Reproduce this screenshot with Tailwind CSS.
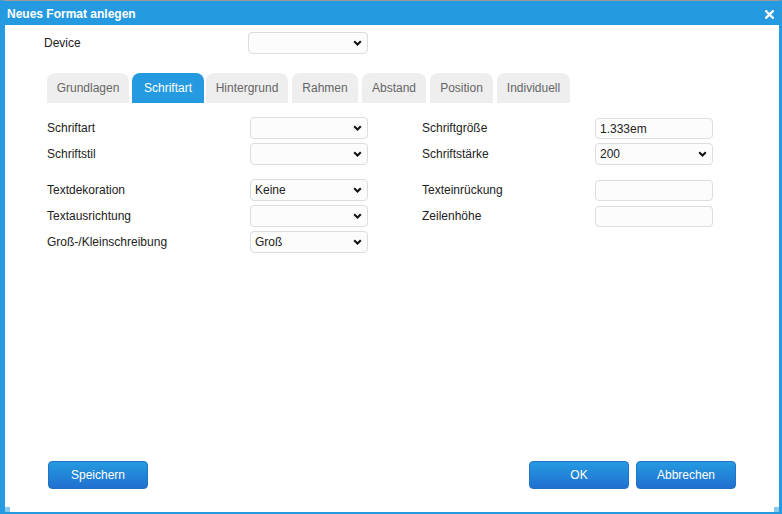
<!DOCTYPE html>
<html lang="de">
<head>
<meta charset="utf-8">
<title>Neues Format anlegen</title>
<script src="https://cdn.jsdelivr.net/npm/@tailwindcss/browser@4"></script>
</head>
<body class="w-[782px] h-[514px] overflow-hidden bg-white font-['Liberation_Sans',Arial,sans-serif] text-[12px] text-[#222]">
<div class="relative w-[782px] h-[514px] flex flex-col border-t border-t-[#9a9a9a] border-l-[5px] border-r-[3px] border-b-[2px] border-l-[#259ae0] border-r-[#259ae0] border-b-[#259ae0]">
  <header class="h-[24px] shrink-0 bg-[#259ae0] flex items-center justify-between pl-[2px] pr-[5px] text-white font-bold">
    <span class="mt-[2px]">Neues Format anlegen</span>
    <svg class="w-[9px] h-[9px] mt-[2px]" viewBox="0 0 9 9" aria-hidden="true"><path d="M1.2 1.2L7.8 7.8M7.8 1.2L1.2 7.8" stroke="#fff" stroke-width="2.3" stroke-linecap="square" fill="none"/></svg>
  </header>
  <main class="relative flex-1 flex flex-col pb-[23px]">
    <div class="flex items-center h-[22px] mt-[7px] pl-[39px]">
      <label class="w-[204px]">Device</label>
      <div class="relative w-[120px] h-[22px]">
        <select class="appearance-none w-full h-full pl-[4px] rounded-[4px] border border-[#ddd] bg-[#fcfcfc] text-[12px]"><option></option></select>
        <svg class="absolute right-[6px] top-[8px] w-[9px] h-[6px] pointer-events-none" viewBox="0 0 9 6" aria-hidden="true"><path d="M1.2 1.2L4.5 4.5L7.8 1.2" stroke="#111" stroke-width="2" fill="none"/></svg>
      </div>
    </div>
    <nav class="flex mt-[19px] ml-[42px] h-[30px]">
      <a class="w-[82px] rounded-t-[8px] bg-[#eeeeee] text-[#666] flex items-center justify-center">Grundlagen</a>
      <a class="ml-[3px] w-[72px] rounded-t-[8px] bg-[#259ae0] text-white flex items-center justify-center">Schriftart</a>
      <a class="ml-[2px] w-[82px] rounded-t-[8px] bg-[#eeeeee] text-[#666] flex items-center justify-center">Hintergrund</a>
      <a class="ml-[4px] w-[66px] rounded-t-[8px] bg-[#eeeeee] text-[#666] flex items-center justify-center">Rahmen</a>
      <a class="ml-[4px] w-[64px] rounded-t-[8px] bg-[#eeeeee] text-[#666] flex items-center justify-center">Abstand</a>
      <a class="ml-[4px] w-[63px] rounded-t-[8px] bg-[#eeeeee] text-[#666] flex items-center justify-center">Position</a>
      <a class="ml-[4px] w-[73px] rounded-t-[8px] bg-[#eeeeee] text-[#666] flex items-center justify-center">Individuell</a>
    </nav>
    <section class="flex mt-[14px] ml-[42px]">
      <div class="w-[375px] flex flex-col">
        <div class="flex items-center h-[22px] mb-[4px]"><label class="w-[203px]">Schriftart</label>
          <div class="relative w-[118px] h-[22px]"><select class="appearance-none w-full h-full pl-[4px] rounded-[4px] border border-[#ddd] bg-[#fcfcfc] text-[12px]"><option></option></select><svg class="absolute right-[6px] top-[8px] w-[9px] h-[6px] pointer-events-none" viewBox="0 0 9 6" aria-hidden="true"><path d="M1.2 1.2L4.5 4.5L7.8 1.2" stroke="#111" stroke-width="2" fill="none"/></svg></div></div>
        <div class="flex items-center h-[22px] mb-[14px]"><label class="w-[203px]">Schriftstil</label>
          <div class="relative w-[118px] h-[22px]"><select class="appearance-none w-full h-full pl-[4px] rounded-[4px] border border-[#ddd] bg-[#fcfcfc] text-[12px]"><option></option></select><svg class="absolute right-[6px] top-[8px] w-[9px] h-[6px] pointer-events-none" viewBox="0 0 9 6" aria-hidden="true"><path d="M1.2 1.2L4.5 4.5L7.8 1.2" stroke="#111" stroke-width="2" fill="none"/></svg></div></div>
        <div class="flex items-center h-[22px] mb-[4px]"><label class="w-[203px]">Textdekoration</label>
          <div class="relative w-[118px] h-[22px]"><select class="appearance-none w-full h-full pl-[4px] rounded-[4px] border border-[#ddd] bg-[#fcfcfc] text-[12px]"><option>Keine</option></select><svg class="absolute right-[6px] top-[8px] w-[9px] h-[6px] pointer-events-none" viewBox="0 0 9 6" aria-hidden="true"><path d="M1.2 1.2L4.5 4.5L7.8 1.2" stroke="#111" stroke-width="2" fill="none"/></svg></div></div>
        <div class="flex items-center h-[22px] mb-[4px]"><label class="w-[203px]">Textausrichtung</label>
          <div class="relative w-[118px] h-[22px]"><select class="appearance-none w-full h-full pl-[4px] rounded-[4px] border border-[#ddd] bg-[#fcfcfc] text-[12px]"><option></option></select><svg class="absolute right-[6px] top-[8px] w-[9px] h-[6px] pointer-events-none" viewBox="0 0 9 6" aria-hidden="true"><path d="M1.2 1.2L4.5 4.5L7.8 1.2" stroke="#111" stroke-width="2" fill="none"/></svg></div></div>
        <div class="flex items-center h-[22px]"><label class="w-[203px]">Groß-/Kleinschreibung</label>
          <div class="relative w-[118px] h-[22px]"><select class="appearance-none w-full h-full pl-[4px] rounded-[4px] border border-[#ddd] bg-[#fcfcfc] text-[12px]"><option>Groß</option></select><svg class="absolute right-[6px] top-[8px] w-[9px] h-[6px] pointer-events-none" viewBox="0 0 9 6" aria-hidden="true"><path d="M1.2 1.2L4.5 4.5L7.8 1.2" stroke="#111" stroke-width="2" fill="none"/></svg></div></div>
      </div>
      <div class="w-[291px] flex flex-col">
        <div class="flex items-center h-[22px] mb-[4px]"><label class="w-[173px]">Schriftgröße</label><input value="1.333em" class="w-[118px] h-[21px] mt-[1px] px-[4px] rounded-[4px] border border-[#ddd] bg-[#fcfcfc] text-[12px]"></div>
        <div class="flex items-center h-[22px] mb-[14px]"><label class="w-[173px]">Schriftstärke</label>
          <div class="relative w-[118px] h-[22px]"><select class="appearance-none w-full h-full pl-[4px] rounded-[4px] border border-[#ddd] bg-[#fcfcfc] text-[12px]"><option>200</option></select><svg class="absolute right-[6px] top-[8px] w-[9px] h-[6px] pointer-events-none" viewBox="0 0 9 6" aria-hidden="true"><path d="M1.2 1.2L4.5 4.5L7.8 1.2" stroke="#111" stroke-width="2" fill="none"/></svg></div></div>
        <div class="flex items-center h-[22px] mb-[4px]"><label class="w-[173px]">Texteinrückung</label><input class="w-[118px] h-[21px] mt-[1px] px-[4px] rounded-[4px] border border-[#ddd] bg-[#fcfcfc] text-[12px]"></div>
        <div class="flex items-center h-[22px]"><label class="w-[173px]">Zeilenhöhe</label><input class="w-[118px] h-[21px] mt-[1px] px-[4px] rounded-[4px] border border-[#ddd] bg-[#fcfcfc] text-[12px]"></div>
      </div>
    </section>
    <footer class="mt-auto flex pl-[43px] pr-[43px]">
      <button class="w-[100px] h-[28px] rounded-[4px] border border-[#1f74c4] bg-gradient-to-b from-[#259ae0] to-[#2170d0] text-white">Speichern</button>
      <button class="ml-auto w-[100px] h-[28px] rounded-[4px] border border-[#1f74c4] bg-gradient-to-b from-[#259ae0] to-[#2170d0] text-white">OK</button>
      <button class="ml-[7px] w-[100px] h-[28px] rounded-[4px] border border-[#1f74c4] bg-gradient-to-b from-[#259ae0] to-[#2170d0] text-white">Abbrechen</button>
    </footer>
    <span class="absolute left-0 bottom-0 w-[5px] h-[5px] bg-[#8cc8ec]"></span>
    <span class="absolute right-0 bottom-0 w-[5px] h-[5px] bg-[#8cc8ec]"></span>
  </main>
</div>
</body>
</html>
